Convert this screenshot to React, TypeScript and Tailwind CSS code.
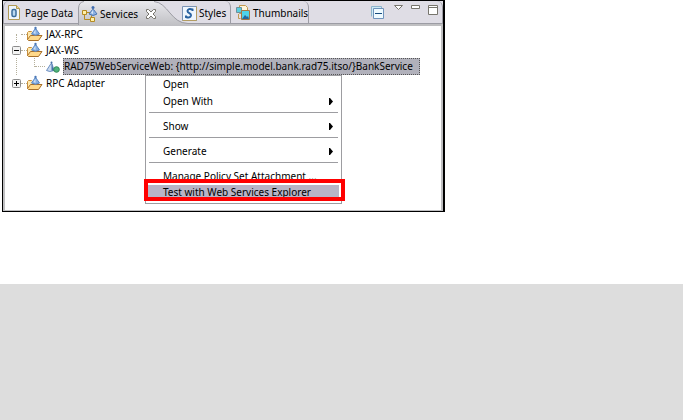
function PageIcon() {
  return (
    <svg width="12" height="16" viewBox="0 0 12 16" className="shrink-0" aria-hidden="true">
      <path d="M.5.5h8l3 3v11H.5z" fill="#eef6fb" stroke="#b09a55" />
      <path d="M8.5.5v3h3" fill="#f6d88a" stroke="#b09a55" />
      <rect x="4" y="4.5" width="4" height="7" rx="1.5" fill="#b9d9f0" stroke="#3a6d9c" strokeWidth="1.5" />
    </svg>
  )
}

function ServicesIcon() {
  return (
    <svg width="16" height="16" viewBox="0 0 16 16" className="shrink-0" aria-hidden="true">
      <path d="M2.5 8v5.5H8M4 6.5h5.5V11" fill="none" stroke="#b58a22" />
      <path d="M.5 4.5h4v4h-4zM8.5 11.5h4v4h-4z" fill="#fff0a8" stroke="#b58a22" />
      <path d="M10.5 3.5L7 8q4 3 8 0l-3.500-4.500z" fill="#8db2e3" stroke="#4a76b5" />
      <path d="M9 7l2-3v4z" fill="#d6e6f8" />
      <circle cx="11" cy="1.5" r="1.5" fill="#3f6cae" />
    </svg>
  )
}

function StylesIcon() {
  return (
    <svg width="15" height="15" viewBox="0 0 15 15" className="shrink-0" aria-hidden="true">
      <path d="M.5.5h14v14H.5z" fill="#eef6fd" stroke="#7b94b4" />
      <path d="M.5 14.5h14V.5" fill="none" stroke="#b39c62" />
      <path d="M10.5 5V3.5Q6 2 5.5 5C5.500 7.500 9.500 7 9 9.500Q8 12.500 4 11V9.500" fill="none" stroke="#2862a0" strokeWidth="2" />
    </svg>
  )
}

function ThumbnailsIcon() {
  return (
    <svg width="15" height="16" viewBox="0 0 15 16" className="shrink-0" aria-hidden="true">
      <path d="M3.5.5h6l2 2v6h-8z" fill="#fff6dc" stroke="#c19a50" />
      <path d="M.5 2.5h5v5h-5z" fill="#58cfe0" stroke="#6e8f9c" />
      <path d="M5.5 5.5h8v9h-8z" fill="#4ed3ea" stroke="#a37842" />
      <path d="M6 14l3-4 2 2 1-1 1 3z" fill="#2367a0" />
      <path d="M2.5 9v4.5h2" fill="none" stroke="#c19a50" />
    </svg>
  )
}

function FolderIcon() {
  return (
    <svg width="16" height="16" viewBox="0 0 16 16" className="shrink-0" aria-hidden="true">
      <path d="M.5 13.5v-7l1-1h3l1 1h6v7z" fill="#ffe9ad" stroke="#c98f3c" />
      <path d="M.5 13.5l3-4h11.500l-3.500 5H1.500z" fill="#ffd98a" stroke="#a8702a" />
      <path d="M8 3L4.500 8q4 2.500 8 0L9 3z" fill="#86afe2" stroke="#5f8ac4" />
      <path d="M6.500 7L8.500 3.500V8z" fill="#cfe1f6" />
      <circle cx="8.5" cy="2" r="1.2" fill="#4a78b8" />
    </svg>
  )
}

function ServiceIcon() {
  return (
    <svg width="15" height="14" viewBox="0 0 15 14" className="shrink-0" aria-hidden="true">
      <path d="M6 3.500L1.500 10.500q3 2 7.500 0L7 3.500z" fill="#c9daf0" stroke="#6c8fc0" />
      <path d="M6.500 3v7.500l2.500.5z" fill="#4670a8" />
      <circle cx="6.5" cy="2.5" r="1" fill="#4670a8" />
      <circle cx="11.5" cy="9.5" r="2.800" fill="#4fb37c" stroke="#338a58" />
    </svg>
  )
}

function Expander({ open }: { open: boolean }) {
  return (
    <svg width="9" height="9" viewBox="0 0 9 9" aria-hidden="true">
      <rect x=".5" y=".5" width="8" height="8" rx="1" fill="#f3f3f3" stroke="#8c8c8c" />
      <path d={open ? 'M2 4.5h5' : 'M2 4.5h5M4.5 2v5'} stroke="#000" />
    </svg>
  )
}

function SubmenuArrow() {
  return (
    <svg width="4" height="7" viewBox="0 0 4 7" className="ml-auto" aria-hidden="true">
      <path d="M0 0h1l3 3.500L1 7H0z" fill="#000" />
    </svg>
  )
}

function ViewTabs() {
  return (
    <header className="flex h-[23px] rounded-t-md border-x border-b border-[#9c9ca4] bg-[#dfdde5] pl-1">
      <button className="flex w-[70px] items-center gap-[5px] pt-0.5 whitespace-nowrap">
        <PageIcon />
        Page Data
      </button>
      <div className="relative h-[25px] w-[104px]">
        <svg className="absolute top-0 left-0" width="120" height="25" viewBox="0 0 120 25" aria-hidden="true">
          <defs>
            <linearGradient id="tab" x1="0" y1="0" x2="0" y2="1">
              <stop offset="0" stopColor="#e9e9ed" />
              <stop offset="1" stopColor="#bfbfc3" />
            </linearGradient>
          </defs>
          <path d="M0 25V7Q1 1 6 0h40c14 1 23 22 40 22h34v3z" fill="none" />
          <path d="M0 25V7Q1 1 6 0h70c14 1 17 22 34 22h10v3z" fill="url(#tab)" />
          <path d="M.5 24V7Q1 1 6 .5M76 .5c14 1 17 22 34 22h10" fill="none" stroke="#9c9ca4" />
        </svg>
        <div className="relative flex h-[23px] items-center pt-0.5 pl-1">
          <button className="flex items-center gap-0.5">
            <ServicesIcon />
            Services
          </button>
          <button aria-label="Close Services" className="ml-2">
            <svg width="10" height="10" viewBox="0 0 10 10" aria-hidden="true">
              <path d="M.5.5h2L5 3 7.500.5h2v2L7 5l2.500 2.500v2h-2L5 7 2.500 9.500h-2v-2L3 5 .5 2.500z" fill="#fff" stroke="#77756d" />
            </svg>
          </button>
        </div>
      </div>
      <button className="relative flex w-[49px] items-center gap-0.5 rounded-tr-md border-r border-[#9c9ca4] pt-0.5">
        <StylesIcon />
        Styles
      </button>
      <button className="flex w-[78px] items-center gap-0.5 rounded-tr-md border-r border-[#9c9ca4] pt-0.5 pl-[5px]">
        <ThumbnailsIcon />
        Thumbnails
      </button>
      <div className="ml-auto flex items-start gap-2 pt-1 pr-1">
        <button aria-label="Collapse all" className="pt-px pr-0.5">
          <svg width="13" height="13" viewBox="0 0 13 13" aria-hidden="true">
            <path d="M.5 10.5V.5h10v2" fill="#cdeaf5" stroke="#8eb5cc" />
            <path d="M2.5 2.5h10v10h-10z" fill="#eefaff" stroke="#6f93bb" />
            <path d="M4 7.5h7" stroke="#174d80" />
          </svg>
        </button>
        <button aria-label="View menu">
          <svg width="9" height="6" viewBox="0 0 9 6" aria-hidden="true">
            <path d="M.5.5h8l-4 4z" fill="#fff" stroke="#77756d" />
          </svg>
        </button>
        <button aria-label="Minimize">
          <svg width="9" height="4" viewBox="0 0 9 4" aria-hidden="true">
            <path d="M.5.5h8v3h-8z" fill="#fff" stroke="#77756d" />
          </svg>
        </button>
        <button aria-label="Maximize">
          <svg width="10" height="10" viewBox="0 0 10 10" aria-hidden="true">
            <path d="M.5.5h9v9h-9zM0 2.5h10" fill="#fff" stroke="#77756d" />
          </svg>
        </button>
      </div>
    </header>
  )
}

function TreeRow({ label, open }: { label: string; open?: boolean }) {
  return (
    <li className="flex h-4 items-center pl-0.5">
      {open === undefined ? (
        <span className="ml-1 h-2 w-[5px] self-end border-l border-dotted border-[#b5b09c]" />
      ) : (
        <button aria-label={`${open ? 'Collapse' : 'Expand'} ${label}`}>
          <Expander open={open} />
        </button>
      )}
      <span className="w-1.5 border-t border-dotted border-[#b5b09c]" />
      <FolderIcon />
      <span className="ml-[3px]">{label}</span>
    </li>
  )
}

function MenuItem({ label, submenu }: { label: string; submenu?: boolean }) {
  return (
    <li>
      <button className="flex h-[17px] w-full items-center pr-2 pb-px pl-[17px] text-left whitespace-nowrap">
        {label}
        {submenu && <SubmenuArrow />}
      </button>
    </li>
  )
}

function Separator() {
  return <li role="separator" className="mx-[3px] mt-0.5 mb-[5px] h-px bg-[#9d9da1]" />
}

function ContextMenu() {
  return (
    <ul className="absolute top-full left-[82px] w-[197px] border border-[#9d9da1] bg-white pb-px">
      <MenuItem label="Open" />
      <MenuItem label="Open With" submenu />
      <Separator />
      <MenuItem label="Show" submenu />
      <Separator />
      <MenuItem label="Generate" submenu />
      <Separator />
      <MenuItem label="Manage Policy Set Attachment ..." />
      <li className="relative">
        <button className="relative flex h-[17px] w-full items-start pl-[17px] text-left leading-[14px] whitespace-nowrap">
          <span className="absolute inset-x-0.5 top-0 bottom-1 bg-[#b8b4c6]" />
          <span className="relative">Test with Web Services Explorer</span>
        </button>
        <span className="absolute -top-1.5 -right-1 bottom-px -left-0.5 border-4 border-[#ff0000]" />
      </li>
    </ul>
  )
}

export default function App() {
  return (
    <main className="flex min-h-screen flex-col bg-white font-['Noto_Sans','Open_Sans',sans-serif] text-[10px] leading-4 text-black">
      <section className="ml-0.5 w-full max-w-[443px] border border-r-2 border-black bg-[#dfdde5]">
        <ViewTabs />
        <div className="border-x-2 border-t-2 border-b border-[#bfbfc1] bg-white">
          <ul className="relative min-h-[184px] pl-[5px]">
            <TreeRow label="JAX-RPC" />
            <TreeRow label="JAX-WS" open />
            <li className="flex h-[17px] items-center pl-1.5">
              <span className="w-[18px] self-stretch border-l border-dotted border-[#b5b09c]" />
              <span className="h-[9px] w-px self-start border-l border-dotted border-[#b5b09c]" />
              <span className="w-2.5 border-t border-dotted border-[#b5b09c]" />
              <ServiceIcon />
              <div className="relative ml-[3px]">
                <span className="block border border-dotted border-[#555] bg-[#b1b1bb] pr-1.5 leading-[15px] whitespace-nowrap">
                  {'RAD75WebServiceWeb: {http://simple.model.bank.rad75.itso/}BankService'}
                </span>
                <ContextMenu />
              </div>
            </li>
            <TreeRow label="RPC Adapter" open={false} />
          </ul>
        </div>
      </section>
      <footer className="mt-[72px] flex-1 bg-[#dddddd]" />
    </main>
  )
}
